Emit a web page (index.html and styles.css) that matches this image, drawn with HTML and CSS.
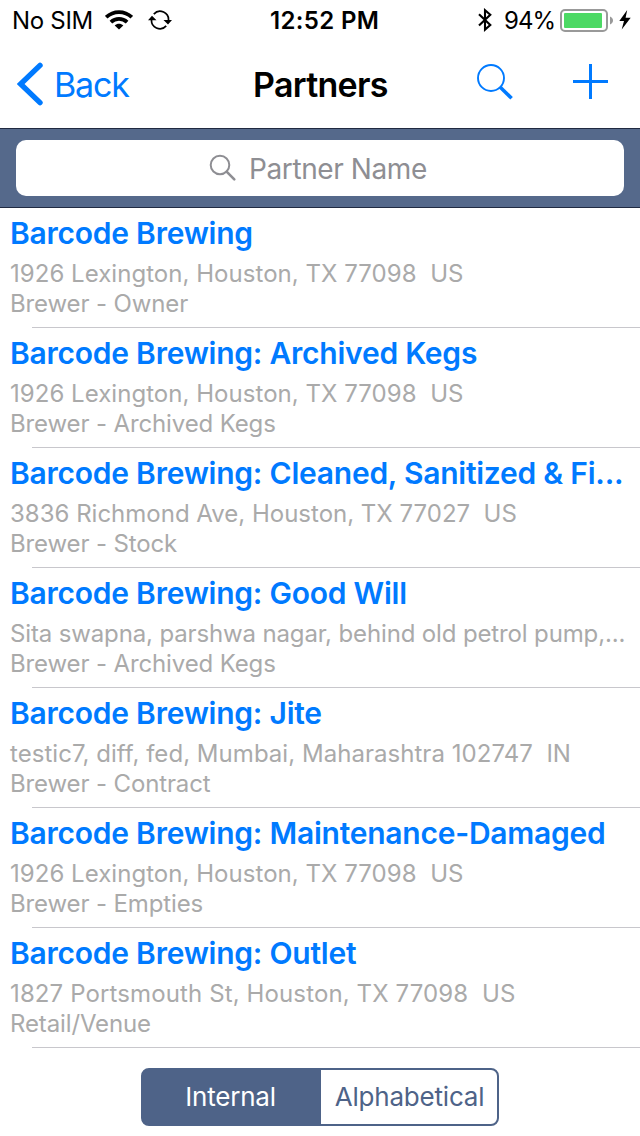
FILE: index.html
```html
<!DOCTYPE html>
<html lang="en">
<head>
<meta charset="utf-8">
<title>Partners</title>
<link rel="stylesheet" href="styles.css">
</head>
<body>
<div class="status">
  <div class="status-left">
    <span class="carrier">No SIM</span>
    <svg class="wifi" width="28" height="20" viewBox="0 0 28 20"><g fill="none" stroke="#000" stroke-width="3.8"><path d="M1.2 7.2C8.4 .3 19.6 .3 26.8 7.2"/><path d="M5.9 12.1C10.5 7.8 17.5 7.8 22.1 12.1"/></g><path d="M14 19.6L9.7 15.4C12.1 13.3 15.9 13.3 18.3 15.4Z"/></svg>
    <svg class="sync" width="24" height="20" viewBox="0 0 24 20"><g fill="none" stroke="#000" stroke-width="1.7"><path d="M5.8 4.1A8.4 8.4 0 0 1 20.4 10.8"/><path d="M18.2 15.9A8.4 8.4 0 0 1 3.6 9.2"/></g><path d="M0 10.2L4 5.7L8.5 10.2ZM15.5 10H24L20 14.5Z"/></svg>
  </div>
  <span class="clock">12:52 PM</span>
  <div class="status-right">
    <svg width="14" height="24" viewBox="0 0 14 24"><path d="M1 6.2L12.3 17L7 21.6V2.2L12.3 6.7L1 17.6" fill="none" stroke="#000" stroke-width="2.1"/></svg>
    <span class="percent">94%</span>
    <svg class="battery" width="54" height="24" viewBox="0 0 54 24"><rect x="1" y="1" width="46" height="21" rx="4" fill="#fff" stroke="#999" stroke-width="2"/><rect x="4" y="4" width="38" height="15" rx="1" fill="#4cd964"/><path d="M50 7.5C54 9 54 14 50 15.5Z" fill="#999"/></svg>
    <svg class="bolt" width="12" height="22" viewBox="0 0 12 22"><path d="M8.2 1L.3 11.9H5L2.7 20.5L11.7 8.8H6.6Z"/></svg>
  </div>
</div>
<header class="nav">
  <div class="back"><svg width="28" height="44" viewBox="0 0 28 44"><path d="M23 3.4L3.6 22L23 40.6" fill="none" stroke="#007aff" stroke-width="5.4" stroke-linecap="round"/></svg><span>Back</span></div>
  <h1>Partners</h1>
  <div class="actions">
    <svg width="37" height="37" viewBox="0 0 37 37" fill="none" stroke="#007aff"><circle cx="14" cy="14" r="13" stroke-width="1.9"/><path d="M23 23L34.6 34.3" stroke-width="3.6"/></svg>
    <svg width="35" height="35" viewBox="0 0 35 35"><path d="M16 0H19V16H35V19H19V35H16V19H0V16H16Z" fill="#007aff"/></svg>
  </div>
</header>
<div class="search"><div class="field"><svg width="28" height="28" viewBox="0 0 28 28" fill="none" stroke="#8e8e93"><circle cx="11" cy="11" r="9.3" stroke-width="2"/><path d="M17.6 17.6L25.3 25.3" stroke-width="2.6" stroke-linecap="round"/></svg><span>Partner Name</span></div></div>
<main>
  <article class="row"><h2>Barcode Brewing</h2><p class="address">1926 Lexington, Houston, TX 77098&nbsp; US</p><p>Brewer - Owner</p></article>
  <article class="row"><h2>Barcode Brewing: Archived Kegs</h2><p class="address">1926 Lexington, Houston, TX 77098&nbsp; US</p><p>Brewer - Archived Kegs</p></article>
  <article class="row"><h2>Barcode Brewing: Cleaned, Sanitized &amp; Fi...</h2><p class="address even">3836 Richmond Ave, Houston, TX 77027&nbsp; US</p><p>Brewer - Stock</p></article>
  <article class="row"><h2>Barcode Brewing: Good Will</h2><p class="address tight">Sita swapna, parshwa nagar, behind old petrol pump,...</p><p>Brewer - Archived Kegs</p></article>
  <article class="row"><h2>Barcode Brewing: Jite</h2><p class="address">testic7, diff, fed, Mumbai, Maharashtra 102747&nbsp; IN</p><p>Brewer - Contract</p></article>
  <article class="row"><h2>Barcode Brewing: Maintenance-Damaged</h2><p class="address">1926 Lexington, Houston, TX 77098&nbsp; US</p><p>Brewer - Empties</p></article>
  <article class="row"><h2>Barcode Brewing: Outlet</h2><p class="address wide">1827 Portsmouth St, Houston, TX 77098&nbsp; US</p><p>Retail/Venue</p></article>
</main>
<footer><div class="segments"><div class="segment selected"><span>Internal</span></div><div class="segment"><span>Alphabetical</span></div></div></footer>
</body>
</html>
```
FILE: styles.css
```css
* { box-sizing: border-box; }
body { margin: 0; width: 640px; height: 1136px; overflow: hidden; background: #fff; color: #000; font-family: Inter, "Liberation Sans", sans-serif; }
h1, h2, p { margin: 0; white-space: nowrap; }
svg { display: block; flex: none; }
span { white-space: nowrap; }
.status { height: 40px; display: grid; grid-template-columns: 270px 110px 260px; font-size: 24px; line-height: 42px; }
.status-left { display: flex; padding-left: 12px; }
.carrier { width: 93px; letter-spacing: -0.3px; }
.wifi { margin-top: 10px; }
.sync { margin: 10px 0 0 15px; }
.clock { font-weight: 600; letter-spacing: 0.35px; }
.status-right { display: flex; padding: 8px 0 0 98px; }
.percent { width: 57px; margin-left: 12px; line-height: 26px; letter-spacing: -1px; }
.battery { margin: 1px 0 0 -1px; }
.bolt { margin: 1px 0 0 5px; }
.nav { height: 88px; display: grid; grid-template-columns: 253px 224px 163px; line-height: 90px; }
.back { display: flex; padding-left: 17px; color: #007aff; font-size: 34px; letter-spacing: -1.2px; }
.back svg { margin: 22px 9px 0 0; }
h1 { font-size: 34px; font-weight: 600; line-height: 90px; letter-spacing: -0.7px; }
.actions { display: flex; gap: 59px; padding-top: 24px; }
.search { height: 80px; padding: 11px 16px; background: #55698b; border: solid #202a41; border-width: 1px 0; }
.field { height: 56px; display: flex; padding-left: 193px; background: #fff; border-radius: 10px; color: #8e8e93; font-size: 28px; line-height: 58px; letter-spacing: -0.4px; }
.field svg { margin: 14px 12px 0 0; }
.row { height: 120px; padding: 7px 0 0 10px; background: linear-gradient(#c8c7cc, #c8c7cc) 32px 119px / 608px 1px no-repeat; }
h2 { margin-bottom: 8px; color: #007aff; font-size: 30px; font-weight: 600; line-height: 36px; letter-spacing: -0.24px; }
p { color: #aaa; font-size: 24px; line-height: 30px; letter-spacing: -0.13px; }
.address { letter-spacing: 0.04px; }
.even { letter-spacing: 0; }
.tight { letter-spacing: -0.14px; }
.wide { letter-spacing: 0.12px; }
footer { height: 88px; padding: 20px 141px; }
.segments { width: 358px; height: 58px; display: grid; grid-template-columns: 178px 176px; border: 2px solid #4e6388; border-radius: 8px; overflow: hidden; background: linear-gradient(90deg, #4e6388 178px, #fff 178px); color: #4e6388; font-size: 26px; line-height: 54px; text-align: center; letter-spacing: -0.2px; }
.segment span { padding-left: 1px; }
.selected { background: #4e6388; color: #fff; }
.selected span { padding: 0 3px 0 0; }
```
